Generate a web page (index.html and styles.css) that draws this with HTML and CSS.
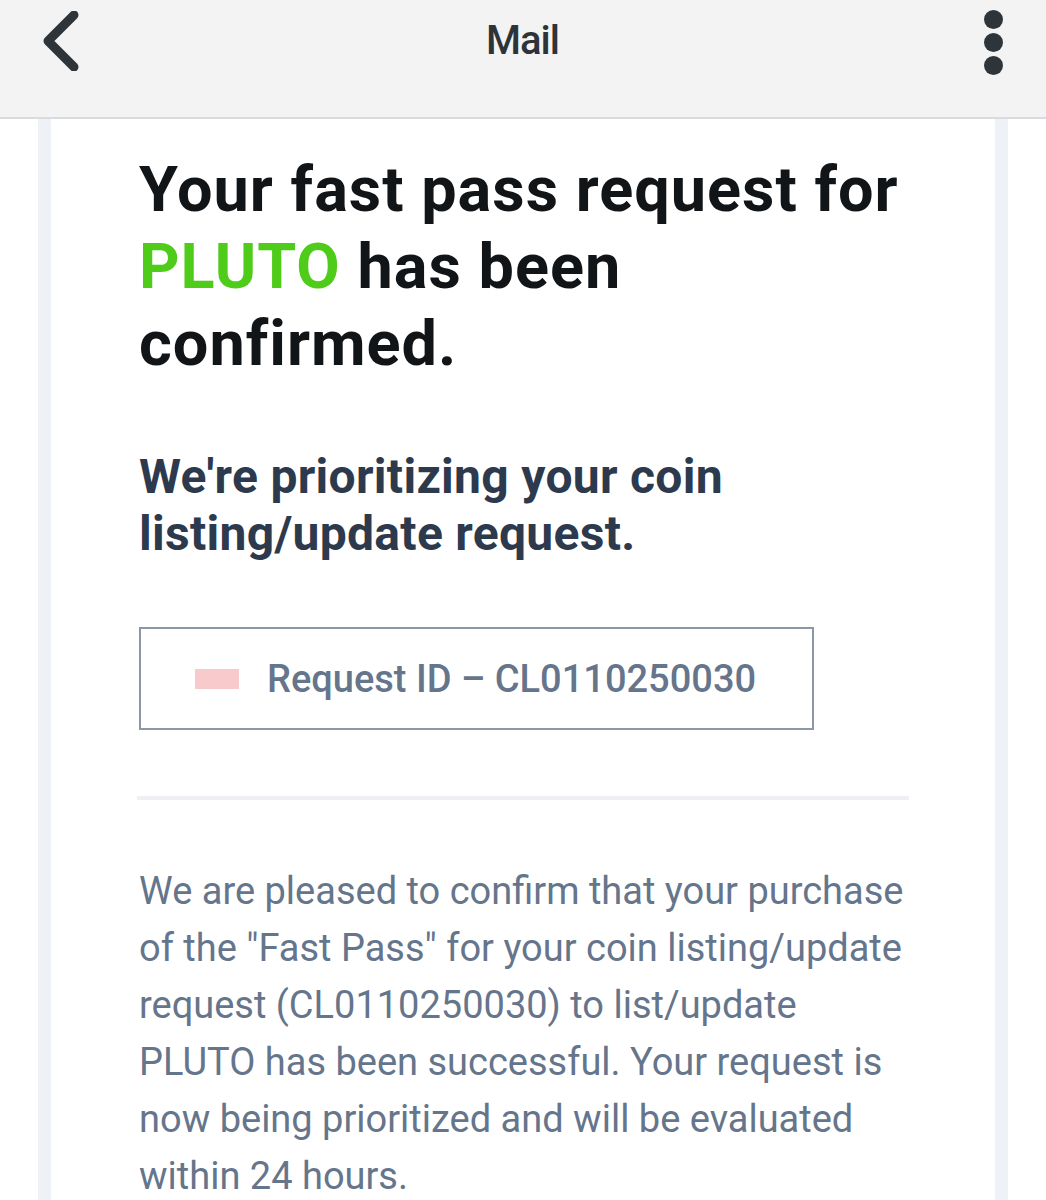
FILE: index.html
```html
<!doctype html>
<html>
<head>
<meta charset="utf-8">
<title>Mail</title>
<link rel="stylesheet" href="styles.css">
</head>
<body>
<div class="topbar">
    <div class="back">
        <svg width="40" height="60" viewBox="0 0 40 60"><path d="M34 4 L8 30 L34 56" fill="none" stroke="#2d353b" stroke-width="9" stroke-linecap="round" stroke-linejoin="round"/></svg>
    </div>
    <div class="title">Mail</div>
    <div class="more">
        <span></span>
        <span></span>
        <span></span>
    </div>
</div>

<div class="page">
    <div class="mail">
        <h1>Your fast pass request for <span class="green">PLUTO</span> has been confirmed.</h1>
        <h2>We're prioritizing your coin listing/update request.</h2>
        <div class="reqbox">
            <span class="mark"></span>
            <span class="reqid">Request ID – CL0110250030</span>
        </div>
        <div class="line"></div>
        <p>We are pleased to confirm that your purchase of the "Fast Pass" for your coin listing/update request (CL0110250030) to list/update PLUTO has been successful. Your request is now being prioritized and will be evaluated within 24 hours.</p>
    </div>
</div>
</body>
</html>
```

FILE: styles.css
```css
html,body { padding:0; margin:0;}
body { font-family: Roboto, "Noto Sans", sans-serif; background:#fff; overflow:hidden;}

.topbar { height:117px; background:#f3f3f3; border-bottom:2px solid #d7dcdf; display:flex; align-items:flex-start; justify-content:space-between; padding:0 33px 0 40px;}
.back { padding-top:11px;}
.back svg { display:block;}
.title { font-size:40px; font-weight:500; color:#2d3439; padding-top:17px; letter-spacing:-1px; margin-right:8px;}
.more { display:flex; flex-direction:column; gap:4px; padding-top:10px; width:40px; align-items:center;}
.more span { width:19px; height:19px; border-radius:50%; background:#2d353b; display:block;}

.page { padding:0 38px;}
.mail { border-left:13px solid #eef2f7; border-right:13px solid #eef2f7; background:#fff; padding:32px 86px 0 88px; min-height:1100px;}

h1 { margin:0; font-size:63px; line-height:77px; font-weight:700; color:#121518; letter-spacing:1px;}
.green { color:#4fcc1a;}

h2 { margin:66px 0 0 0; font-size:48px; line-height:57px; font-weight:700; color:#2d3a4d; letter-spacing:0.3px;}

.reqbox { margin-top:65px; width:671px; height:99px; border:2px solid #8c98a8; display:flex; align-items:center;}
.mark { width:44px; height:20px; background:#f8cacc; margin-left:54px; margin-right:28px;}
.reqid { font-size:38px; font-weight:500; color:#65758b;}

.line { margin-top:66px; width:772px; height:4px; background:#eef0f3; margin-left:-2px;}

p { margin:63px 0 0 0; font-size:38px; line-height:57px; color:#65758b;}
```
